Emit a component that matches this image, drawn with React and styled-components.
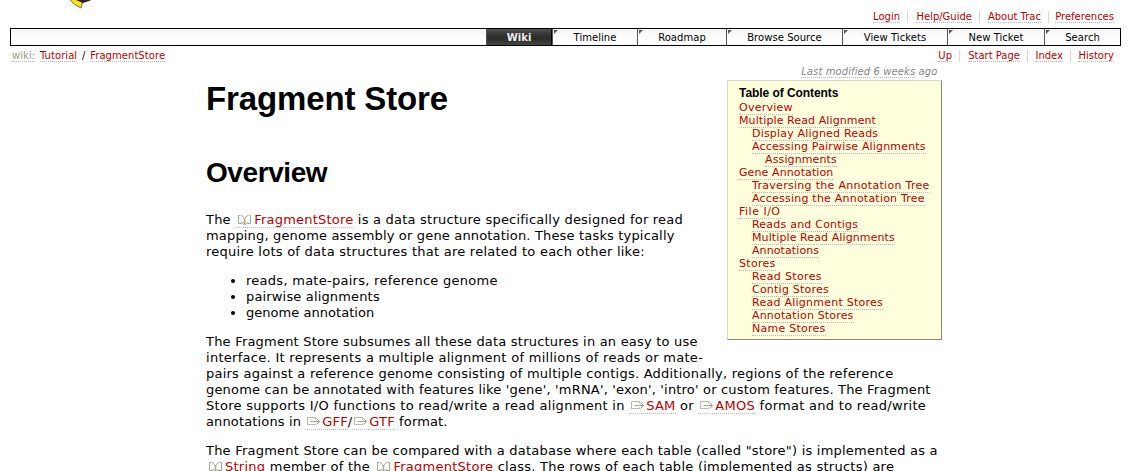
import React from 'react';
import styled, { createGlobalStyle } from 'styled-components';

const Global = createGlobalStyle`
  html, body { margin: 0; background: #fff; overflow: hidden; }
  body { height: 471px; color: #000; font-family: Verdana, "DejaVu Sans", sans-serif; font-size: 13px; }
  * { box-sizing: border-box; }
`;
const Page = styled.div`
  height: 471px;
  padding: 0 10px;
  overflow: hidden;
`;
const Header = styled.header`
  display: flex;
  height: 28px;
  justify-content: space-between;
`;
const Logo = styled.svg`
  width: 30px;
  height: 10px;
  margin-left: 55px;
`;
const Link = styled.a`
  color: ${(p) => (p.$muted ? '#999988' : '#bb0000')};
  border-bottom: 1px dotted #bbb;
  text-decoration: none;
  white-space: nowrap;
`;
const MetaList = styled.ul`
  display: flex;
  list-style: none;
  margin: 0;
  padding: ${(p) => p.$top}px 7px 0 0;
  font-size: 10px;
  line-height: 12px;
`;
const MetaItem = styled.li`
  width: ${(p) => p.$w}px;
  height: 12px;
  padding-right: 7px;
  text-align: right;
  white-space: nowrap;
  & + & { border-left: 1px solid #d7d7d7; }
  &:last-child { padding-right: 0; }
`;
const MainNav = styled.nav`
  display: flex;
  justify-content: flex-end;
  width: 1111px;
  height: 18px;
  border: 1px solid #000;
  background: linear-gradient(#f7f5f7, #fff 70%);
  font-size: 10px;
  line-height: 17px;
`;
const Tab = styled.a`
  position: relative;
  width: ${(p) => p.$w}px;
  height: 16px;
  border-left: 1px solid #555;
  text-align: center;
  white-space: nowrap;
  letter-spacing: 0.05px;
  ${(p) => p.$active
    ? 'color: #eee; font-weight: bold; background: linear-gradient(#555, #333 35%, #2b2b29 60%, #454543); border-right: 1px solid #000;'
    : '&::before { content: ""; position: absolute; left: 1px; top: 1px; border-top: 4px solid #555; border-right: 4px solid transparent; }'}
`;
const Context = styled.div`
  display: flex;
  justify-content: space-between;
  height: 18px;
`;
const Path = styled.div`
  padding: 4px 0 0 2px;
  font-size: 10px;
  line-height: 12px;
  white-space: pre;
  letter-spacing: 0.06px;
  word-spacing: 1.5px;
`;
const Content = styled.main`
  width: 736px;
  margin-left: 196px;
`;
const Modified = styled.div`
  height: 16px;
  padding-right: 4.5px;
  color: #888;
  font-size: 10px;
  font-style: italic;
  line-height: 15px;
  text-align: right;
  letter-spacing: 0.1px;
`;
const Muted = styled.span`
  border-bottom: 1px dotted #bbb;
`;
const Toc = styled.aside`
  float: right;
  width: 215px;
  height: 260px;
  padding: 5px 0 0 11px;
  border: 1px solid #d7d7c8;
  border-right-color: #888877;
  border-bottom-color: #888877;
  background: #ffffdd;
`;
const TocTitle = styled.h4`
  margin: 0 0 1px;
  font: bold 12px/14px Arial, "Liberation Sans", sans-serif;
  letter-spacing: -0.06px;
`;
const TocItem = styled.div`
  height: 13px;
  padding-left: ${(p) => p.$level * 13}px;
  font-size: 11px;
  line-height: 13px;
  letter-spacing: ${(p) => p.$ls || 0}px;
  white-space: nowrap;
`;
const Title = styled.h1`
  margin: 0;
  font: bold 33px/38px Arial, "Liberation Sans", sans-serif;
  letter-spacing: -0.13px;
  white-space: nowrap;
`;
const Heading = styled.h2`
  margin: 38px 0 22px;
  font: bold 28px/34px Arial, "Liberation Sans", sans-serif;
  letter-spacing: -0.42px;
`;
const Paragraph = styled.p`
  margin: 0 0 13px;
`;
const Line = styled.span`
  display: block;
  height: 16px;
  line-height: 16px;
  white-space: pre;
  letter-spacing: ${(p) => p.$ls || 0}px;
`;
const List = styled.ul`
  margin: 0 0 13px;
  padding: 0 0 0 40px;
`;
const Bullet = styled.li`
  height: 16px;
  line-height: 16px;
  letter-spacing: ${(p) => p.$ls || 0}px;
`;
const Glyph = styled.svg`
  width: ${(p) => p.$w}px;
  height: 12px;
  margin: 0 2px;
  vertical-align: -2px;
  fill: none;
  stroke: #a5a994;
`;

const Book = () => (
  <Glyph $w={15} viewBox="0 0 15 12">
    <path d="M3 1.500H1.500V9.500H4.500M12 1.500H13.500V9.500H10.500" />
    <path d="M3.500 1Q6.500 2 7.500 5.500Q8.500 2 11.500 1M4 8.500Q6.500 9 7.500 11Q8.500 9 11 8.500" />
    <path d="M7.500 5V11" strokeWidth="1.600" />
  </Glyph>
);
const Arrow = () => (
  <Glyph $w={13} viewBox="0 0 13 12">
    <path d="M8.500 3.500V1.500H0.500V8.500H8.500V7.500" strokeOpacity="0.8" />
    <path d="M3.500 5.500H12.500M9.500 2.500L12.500 5.500L9.500 8.500" stroke="#98a58c" />
  </Glyph>
);
const Ref = ({ icon, children }) => (
  <Link>{icon === 'book' ? <Book /> : <Arrow />}{children}</Link>
);

const account = [['Login', 34], ['Help/Guide', 72], ['About Trac', 69], ['Preferences', 66]];
const pages = [['Up', 21], ['Start Page', 68], ['Index', 43], ['History', 44]];
const tabs = [['Wiki', 66], ['Timeline', 85], ['Roadmap', 89], ['Browse Source', 116], ['View Tickets', 105], ['New Ticket', 97], ['Search', 76]];
const toc = [
  [0, 'Overview', 0.25], [0, 'Multiple Read Alignment', 0.1], [1, 'Display Aligned Reads', 0.19],
  [1, 'Accessing Pairwise Alignments', 0.17], [2, 'Assignments', 0.13], [0, 'Gene Annotation', 0.1],
  [1, 'Traversing the Annotation Tree', 0.3], [1, 'Accessing the Annotation Tree', 0.22],
  [0, 'File I/O', 0.5], [1, 'Reads and Contigs', 0.22], [1, 'Multiple Read Alignments', 0.1],
  [1, 'Annotations', 0.1], [0, 'Stores', 0.3], [1, 'Read Stores', 0.36], [1, 'Contig Stores', 0.23],
  [1, 'Read Alignment Stores', 0.25], [1, 'Annotation Stores', 0.17], [1, 'Name Stores', 0.25],
];

export default function App() {
  return (
    <Page>
      <Global />
      <Header>
        <Logo viewBox="0 0 30 10">
          <path d="M4.500 -1Q9 5.500 16 8L17.500 2.500L12 -1Z" fill="#ffe122" stroke="#77723c" />
          <path d="M11 0L18 3L25.500 0.500V0Z" fill="#2b2422" />
        </Logo>
        <MetaList $top={11}>
          {account.map(([t, w]) => <MetaItem key={t} $w={w}><Link>{t}</Link></MetaItem>)}
        </MetaList>
      </Header>
      <MainNav>
        {tabs.map(([t, w], i) => <Tab key={t} $w={w} $active={i === 0}>{t}</Tab>)}
      </MainNav>
      <Context>
        <Path><Link $muted>wiki:</Link> <Link>Tutorial</Link> / <Link>FragmentStore</Link></Path>
        <MetaList $top={4}>
          {pages.map(([t, w]) => <MetaItem key={t} $w={w}><Link>{t}</Link></MetaItem>)}
        </MetaList>
      </Context>
      <Content>
        <Modified><Muted>Last modified</Muted> <Muted>6 weeks</Muted> ago</Modified>
        <Toc>
          <TocTitle>Table of Contents</TocTitle>
          {toc.map(([l, t, ls]) => <TocItem key={t} $level={l} $ls={ls}><Link>{t}</Link></TocItem>)}
        </Toc>
        <Title>Fragment Store</Title>
        <Heading>Overview</Heading>
        <Paragraph>
          <Line $ls={0.22}>The <Ref icon="book">FragmentStore</Ref> is a data structure specifically designed for read</Line>
          <Line $ls={0.17}>mapping, genome assembly or gene annotation. These tasks typically</Line>
          <Line $ls={0.25}>require lots of data structures that are related to each other like:</Line>
        </Paragraph>
        <List>
          <Bullet $ls={0.27}>reads, mate-pairs, reference genome</Bullet>
          <Bullet $ls={0.16}>pairwise alignments</Bullet>
          <Bullet $ls={0.04}>genome annotation</Bullet>
        </List>
        <Paragraph>
          <Line $ls={0.21}>The Fragment Store subsumes all these data structures in an easy to use</Line>
          <Line $ls={0.29}>interface. It represents a multiple alignment of millions of reads or mate-</Line>
          <Line $ls={0.23}>pairs against a reference genome consisting of multiple contigs. Additionally, regions of the reference</Line>
          <Line $ls={0.18}>genome can be annotated with features like 'gene', 'mRNA', 'exon', 'intro' or custom features. The Fragment</Line>
          <Line $ls={0.29}>Store supports I/O functions to read/write a read alignment in <Ref>SAM</Ref> or <Ref>AMOS</Ref> format and to read/write</Line>
          <Line $ls={0.14}>annotations in <Ref>GFF</Ref>/<Ref>GTF</Ref> format.</Line>
        </Paragraph>
        <Paragraph>
          <Line $ls={0.22}>The Fragment Store can be compared with a database where each table (called "store") is implemented as a</Line>
          <Line $ls={0.255}><Ref icon="book">String</Ref> member of the <Ref icon="book">FragmentStore</Ref> class. The rows of each table (implemented as structs) are</Line>
        </Paragraph>
      </Content>
    </Page>
  );
}
